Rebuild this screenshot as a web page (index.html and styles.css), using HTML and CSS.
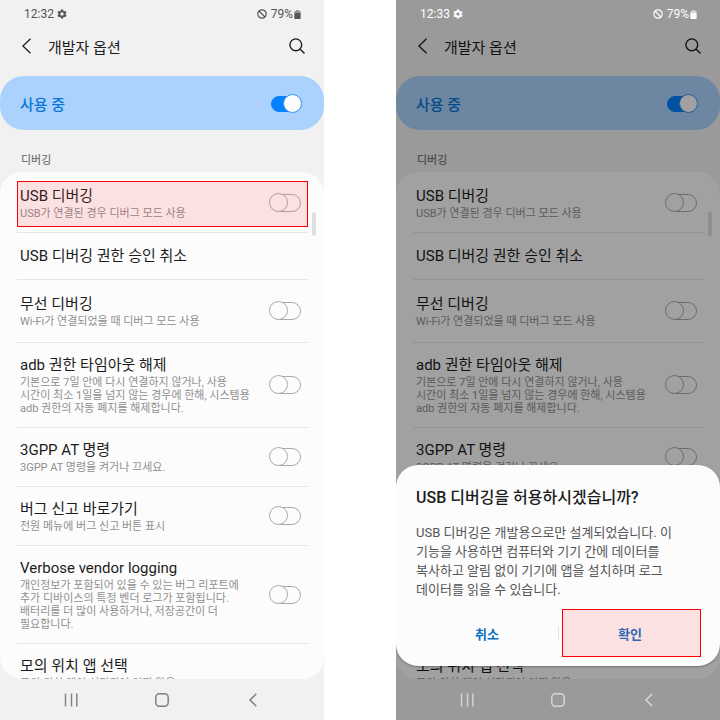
FILE: index.html
```html
<!DOCTYPE html>
<html lang="ko">
<head>
<meta charset="utf-8">
<meta name="viewport" content="width=device-width, initial-scale=1">
<title>개발자 옵션</title>
<link rel="stylesheet" href="styles.css">
</head>
<body>
<svg class="defs" aria-hidden="true">
  <symbol id="gear" viewBox="0 0 24 24"><path fill="currentColor" fill-rule="evenodd" d="M9.5 1h5l.7 3.4 2 1.2 3.3-1.1 2.5 4.3-2.6 2.2v2l2.6 2.2-2.5 4.3-3.3-1.1-2 1.2-.7 3.4h-5l-.7-3.4-2-1.2-3.3 1.1L1 15.200l2.600-2.200v-2L1 8.800l2.500-4.300 3.300 1.100 2-1.200zM12 8a4 4 0 1 0 0 8 4 4 0 0 0 0-8z"/></symbol>
  <symbol id="block" viewBox="0 0 10 10"><g fill="none" stroke="currentColor" stroke-width="1.2"><circle cx="5" cy="5" r="4.2"/><path d="M2 2l6 6"/></g></symbol>
  <symbol id="battery" viewBox="0 0 7 10"><path fill="currentColor" fill-opacity=".6" d="M2 0h3v1h1.200q.8 0 .8.800V3H0V1.800Q0 1 .8 1H2z"/><path fill="currentColor" d="M0 3h7v6.200q0 .8-.8.800H.8Q0 10 0 9.200z"/></symbol>
  <symbol id="back" viewBox="0 0 10 16"><path fill="none" stroke="currentColor" stroke-width="1.300" d="M8.500.8L.900 8l7.600 7.200"/></symbol>
  <symbol id="search" viewBox="0 0 16 16"><g fill="none" stroke="currentColor" stroke-width="1.400"><circle cx="6.800" cy="6.800" r="5.900"/><path d="M11 11l4.500 4.500"/></g></symbol>
  <symbol id="recents" viewBox="0 0 14 14"><path fill="none" stroke="currentColor" stroke-width="1.400" d="M1.500.5v13M7.500.5v13M12.800.5v13"/></symbol>
  <symbol id="home" viewBox="0 0 14 14"><rect x=".8" y=".8" width="12.400" height="12.400" rx="3.600" fill="none" stroke="currentColor" stroke-width="1.500"/></symbol>
  <symbol id="navback" viewBox="0 0 8 14"><path fill="none" stroke="currentColor" stroke-width="1.500" d="M7.300.8L1 7l6.300 6.200"/></symbol>
</svg>
<main class="screens">
  <section class="phone">
    <div class="status"><span>12:32</span><svg class="gear"><use href="#gear"/></svg><svg class="block"><use href="#block"/></svg><span>79%</span><svg class="battery"><use href="#battery"/></svg></div>
    <header class="appbar">
      <button class="icon-btn" aria-label="뒤로"><svg class="back"><use href="#back"/></svg></button>
      <h1>개발자 옵션</h1>
      <button class="icon-btn" aria-label="검색"><svg class="search"><use href="#search"/></svg></button>
    </header>
    <label class="master"><span>사용 중</span><input class="switch" type="checkbox" checked></label>
    <h2 class="group">디버깅</h2>
    <div class="card">
      <ul class="options">
        <li class="marked"><label class="row roomy"><span class="text"><b>USB 디버깅</b><small>USB가 연결된 경우 디버그 모드 사용</small></span><input class="switch" type="checkbox"></label></li>
        <li><a class="row single" href="#"><b>USB 디버깅 권한 승인 취소</b></a></li>
        <li><label class="row roomy tall"><span class="text"><b>무선 디버깅</b><small>Wi-Fi가 연결되었을 때 디버그 모드 사용</small></span><input class="switch" type="checkbox"></label></li>
        <li><label class="row"><span class="text"><b>adb 권한 타임아웃 해제</b><small>기본으로 7일 안에 다시 연결하지 않거나, 사용<br>시간이 최소 1일을 넘지 않는 경우에 한해, 시스템용<br>adb 권한의 자동 폐지를 해제합니다.</small></span><input class="switch" type="checkbox"></label></li>
        <li><label class="row"><span class="text"><b>3GPP AT 명령</b><small>3GPP AT 명령을 켜거나 끄세요.</small></span><input class="switch" type="checkbox"></label></li>
        <li><label class="row"><span class="text"><b>버그 신고 바로가기</b><small>전원 메뉴에 버그 신고 버튼 표시</small></span><input class="switch" type="checkbox"></label></li>
        <li><label class="row"><span class="text"><b>Verbose vendor logging</b><small>개인정보가 포함되어 있을 수 있는 버그 리포트에<br>추가 디바이스의 특정 벤더 로그가 포함됩니다.<br>배터리를 더 많이 사용하거나, 저장공간이 더<br>필요합니다.</small></span><input class="switch" type="checkbox"></label></li>
        <li><a class="row" href="#"><span class="text"><b>모의 위치 앱 선택</b><small>모의 위치 앱이 설정되어 있지 않음</small></span></a></li>
      </ul>
      <span class="scrollbar"></span>
    </div>
    <nav class="nav">
      <button aria-label="최근 앱"><svg class="nav-icon"><use href="#recents"/></svg></button>
      <button aria-label="홈"><svg class="nav-icon"><use href="#home"/></svg></button>
      <button aria-label="뒤로"><svg class="nav-icon"><use href="#navback"/></svg></button>
    </nav>
  </section>

  <section class="phone dimmed">
    <div class="status"><span>12:33</span><svg class="gear"><use href="#gear"/></svg><svg class="block"><use href="#block"/></svg><span>79%</span><svg class="battery"><use href="#battery"/></svg></div>
    <header class="appbar">
      <button class="icon-btn" aria-label="뒤로"><svg class="back"><use href="#back"/></svg></button>
      <h1>개발자 옵션</h1>
      <button class="icon-btn" aria-label="검색"><svg class="search"><use href="#search"/></svg></button>
    </header>
    <label class="master"><span>사용 중</span><input class="switch" type="checkbox" checked></label>
    <h2 class="group">디버깅</h2>
    <div class="card">
      <ul class="options">
        <li><label class="row roomy"><span class="text"><b>USB 디버깅</b><small>USB가 연결된 경우 디버그 모드 사용</small></span><input class="switch" type="checkbox"></label></li>
        <li><a class="row single" href="#"><b>USB 디버깅 권한 승인 취소</b></a></li>
        <li><label class="row roomy tall"><span class="text"><b>무선 디버깅</b><small>Wi-Fi가 연결되었을 때 디버그 모드 사용</small></span><input class="switch" type="checkbox"></label></li>
        <li><label class="row"><span class="text"><b>adb 권한 타임아웃 해제</b><small>기본으로 7일 안에 다시 연결하지 않거나, 사용<br>시간이 최소 1일을 넘지 않는 경우에 한해, 시스템용<br>adb 권한의 자동 폐지를 해제합니다.</small></span><input class="switch" type="checkbox"></label></li>
        <li><label class="row"><span class="text"><b>3GPP AT 명령</b><small>3GPP AT 명령을 켜거나 끄세요.</small></span><input class="switch" type="checkbox"></label></li>
        <li><label class="row"><span class="text"><b>버그 신고 바로가기</b><small>전원 메뉴에 버그 신고 버튼 표시</small></span><input class="switch" type="checkbox"></label></li>
        <li><label class="row"><span class="text"><b>Verbose vendor logging</b><small>개인정보가 포함되어 있을 수 있는 버그 리포트에<br>추가 디바이스의 특정 벤더 로그가 포함됩니다.<br>배터리를 더 많이 사용하거나, 저장공간이 더<br>필요합니다.</small></span><input class="switch" type="checkbox"></label></li>
        <li><a class="row" href="#"><span class="text"><b>모의 위치 앱 선택</b><small>모의 위치 앱이 설정되어 있지 않음</small></span></a></li>
      </ul>
      <span class="scrollbar"></span>
    </div>
    <nav class="nav">
      <button aria-label="최근 앱"><svg class="nav-icon"><use href="#recents"/></svg></button>
      <button aria-label="홈"><svg class="nav-icon"><use href="#home"/></svg></button>
      <button aria-label="뒤로"><svg class="nav-icon"><use href="#navback"/></svg></button>
    </nav>
    <div class="dialog" role="dialog" aria-labelledby="dialog-title">
      <h2 id="dialog-title">USB 디버깅을 허용하시겠습니까?</h2>
      <p>USB 디버깅은 개발용으로만 설계되었습니다. 이<br>기능을 사용하면 컴퓨터와 기기 간에 데이터를<br>복사하고 알림 없이 기기에 앱을 설치하며 로그<br>데이터를 읽을 수 있습니다.</p>
      <div class="actions">
        <button>취소</button>
        <span class="separator"></span>
        <button class="marked">확인</button>
      </div>
    </div>
  </section>
</main>
</body>
</html>
```

FILE: styles.css
```css
* {
  box-sizing: border-box;
}

body {
  margin: 0;
  background: #fff;
  color: #1c1c1c;
  font-family: Roboto, "Noto Sans CJK KR", sans-serif;
}

h1, h2, p, ul {
  margin: 0;
  padding: 0;
}

button {
  padding: 0;
  border: 0;
  background: none;
  color: inherit;
  font: inherit;
}

a {
  color: inherit;
  text-decoration: none;
}

svg {
  display: block;
}

.defs {
  position: absolute;
  width: 0;
  height: 0;
}

.screens {
  display: grid;
  grid-template-columns: 1fr 1fr;
  gap: 10%;
  height: 100vh;
}

.phone {
  position: relative;
  display: flex;
  flex-direction: column;
  min-width: 0;
  min-height: 0;
  overflow: hidden;
  background: #f1f1f1;
}

.status {
  display: flex;
  align-items: center;
  height: 28px;
  padding: 0 23px 0 24px;
  color: #555;
  font-size: 12px;
}

.gear {
  width: 10px;
  height: 10px;
  margin-left: 3px;
}

.block {
  width: 10px;
  height: 10px;
  margin: 0 4px 0 auto;
}

.battery {
  width: 7px;
  height: 9px;
  margin-left: 1px;
}

.appbar {
  display: flex;
  align-items: center;
  height: 36px;
  padding: 0 19px 0 22px;
}

.appbar h1 {
  flex: 1;
  margin-left: 16px;
  font-size: 15px;
  font-weight: 400;
}

.back {
  width: 10px;
  height: 16px;
}

.search {
  width: 16px;
  height: 16px;
}

.master {
  display: flex;
  align-items: center;
  justify-content: space-between;
  height: 54px;
  margin-top: 12px;
  padding: 0 22px 0 20px;
  border-radius: 24px;
  background: #abd2fc;
  color: #0b77d8;
  font-size: 15px;
  font-weight: 500;
}

.group {
  padding: 23px 21px 3px;
  color: #777;
  font-size: 11px;
  font-weight: 500;
  line-height: 16px;
}

.card {
  position: relative;
  flex: 1;
  min-height: 0;
  overflow: hidden;
  border-radius: 22px;
  background: #fcfcfc;
}

.options {
  padding: 0 16px 0 17px;
  list-style: none;
}

.options li {
  border-bottom: 1px solid #e6e6e6;
}

.row {
  display: flex;
  align-items: center;
  justify-content: space-between;
  padding: 11px 7px 12px 3px;
  white-space: nowrap;
}

.roomy {
  padding-top: 13px;
}

.tall {
  padding-bottom: 14px;
}

.single {
  padding: 12px 3px;
}

.row b {
  display: block;
  font-size: 15px;
  font-weight: 400;
  line-height: 22px;
}

.row small {
  display: block;
  color: #909090;
  font-size: 11px;
  line-height: 13px;
}

.switch {
  position: relative;
  flex: none;
  width: 32px;
  height: 19px;
  margin: 0;
  appearance: none;
}

.switch::before,
.switch::after {
  content: "";
  position: absolute;
  box-sizing: border-box;
  border: 1px solid #aaa;
  background: #fcfcfc;
}

.switch::before {
  inset: 1px 0 0 2px;
  border-radius: 10px;
}

.switch::after {
  top: 0;
  left: 0;
  width: 19px;
  height: 19px;
  border-radius: 50%;
}

.switch:checked::before {
  inset: 2px 1px 1px;
  border-color: #0381fe;
  background: #0381fe;
}

.switch:checked::after {
  right: 0;
  left: auto;
  border-color: #3298f5;
}

.scrollbar {
  position: absolute;
  top: 40px;
  right: 8px;
  width: 4px;
  height: 24px;
  border-radius: 2px;
  background: #dedede;
}

.marked {
  position: relative;
}

.marked::after {
  content: "";
  position: absolute;
  border: 1px solid #f00;
  background: rgb(255 30 40 / 12%);
}

li.marked::after {
  inset: 9px 0 5px;
}

.nav {
  display: grid;
  grid-template-columns: repeat(3, 28%);
  justify-content: center;
  height: 41px;
  color: #808080;
}

.nav button {
  display: grid;
  place-items: center;
}

.nav-icon {
  width: 14px;
  height: 14px;
}

.dimmed::after {
  content: "";
  position: absolute;
  inset: 0;
  background: rgb(0 0 0 / 36%);
}

.dimmed .status,
.dimmed .nav {
  position: relative;
  z-index: 1;
  color: #fff;
}

.dimmed .nav {
  color: #d6d6d6;
}

.dialog {
  position: absolute;
  right: 0;
  bottom: 54px;
  left: 0;
  z-index: 2;
  padding: 20px 19px 9px 20px;
  border-radius: 22px;
  background: #fcfcfc;
  box-shadow: 0 1px 2px rgb(0 0 0 / 30%);
  white-space: nowrap;
}

.dialog h2 {
  font-size: 16px;
  font-weight: 500;
  line-height: 26px;
}

.dialog p {
  margin: 12px 0 10px;
  color: #555;
  font-size: 13px;
  line-height: 19px;
}

.actions {
  display: grid;
  grid-template-columns: 1fr 1px 1fr;
  align-items: center;
  height: 48px;
  color: #0b70c4;
  font-size: 13px;
  font-weight: 700;
}

.actions button {
  height: 100%;
}

.actions .marked::after {
  inset: 0 0 0 3px;
}

.separator {
  height: 14px;
  background: #e4e4e4;
}
```
